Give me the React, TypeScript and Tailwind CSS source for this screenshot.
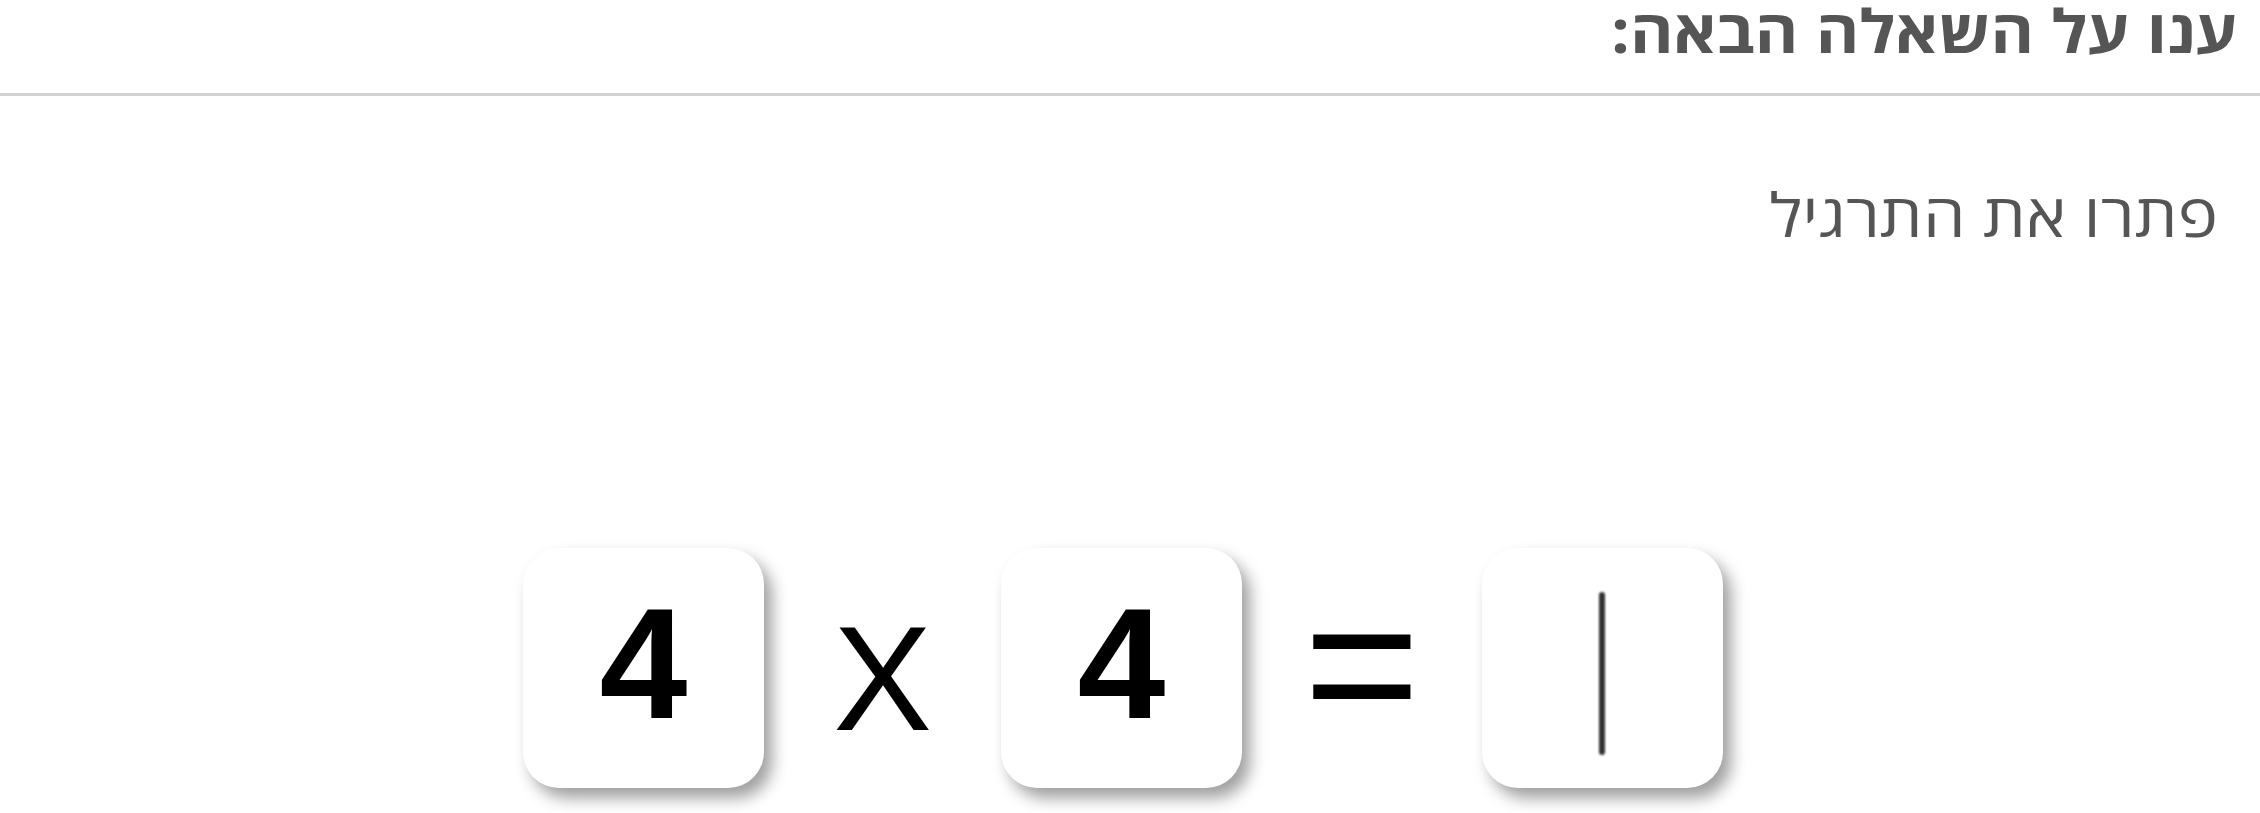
export default function App() {
  const card =
    "w-[241px] h-[240px] bg-white rounded-[36px] shadow-[8px_10px_16px_rgba(0,0,0,0.38)] flex items-center justify-center shrink-0";
  return (
    <div dir="rtl" className="w-[2260px] h-[813px] bg-white overflow-hidden" style={{ fontFamily: '"Open Sans", "Noto Sans", sans-serif' }}>
      <div className="h-[96px] border-b-[3px] border-[#d2d2d2] pr-[23px] overflow-hidden">
        <div className="text-[60px] leading-none font-bold text-[#555555] whitespace-nowrap inline-block origin-right scale-x-[1.106]">ענו על השאלה הבאה:</div>
      </div>
      <div className="pr-[42px] pt-[88px] h-[148px]">
        <div className="text-[60px] leading-none text-[#555555] whitespace-nowrap inline-block origin-right scale-x-[1.13]">פתרו את התרגיל</div>
      </div>
      <div dir="ltr" className="flex justify-center items-center gap-[71px] mt-[304px] pr-[14px]" style={{ fontFamily: '"Liberation Sans", Arial, sans-serif' }}>
        <div className={card}>
          <span className="text-[158px] font-bold leading-none text-black -mt-[10px]">4</span>
        </div>
        <div className="w-[95px] flex justify-center">
          <span className="text-[148px] leading-none text-black mt-[22px]">X</span>
        </div>
        <div className={card}>
          <span className="text-[158px] font-bold leading-none text-black -mt-[10px]">4</span>
        </div>
        <div className="w-[98px] flex justify-center">
          <span className="text-[200px] leading-none text-black -mt-[8px]">=</span>
        </div>
        <div className={card}>
          <div className="w-[6px] h-[163px] bg-[#333333] blur-[1px] rounded-sm mt-[10px] -ml-[1px]" />
        </div>
      </div>
    </div>
  );
}
